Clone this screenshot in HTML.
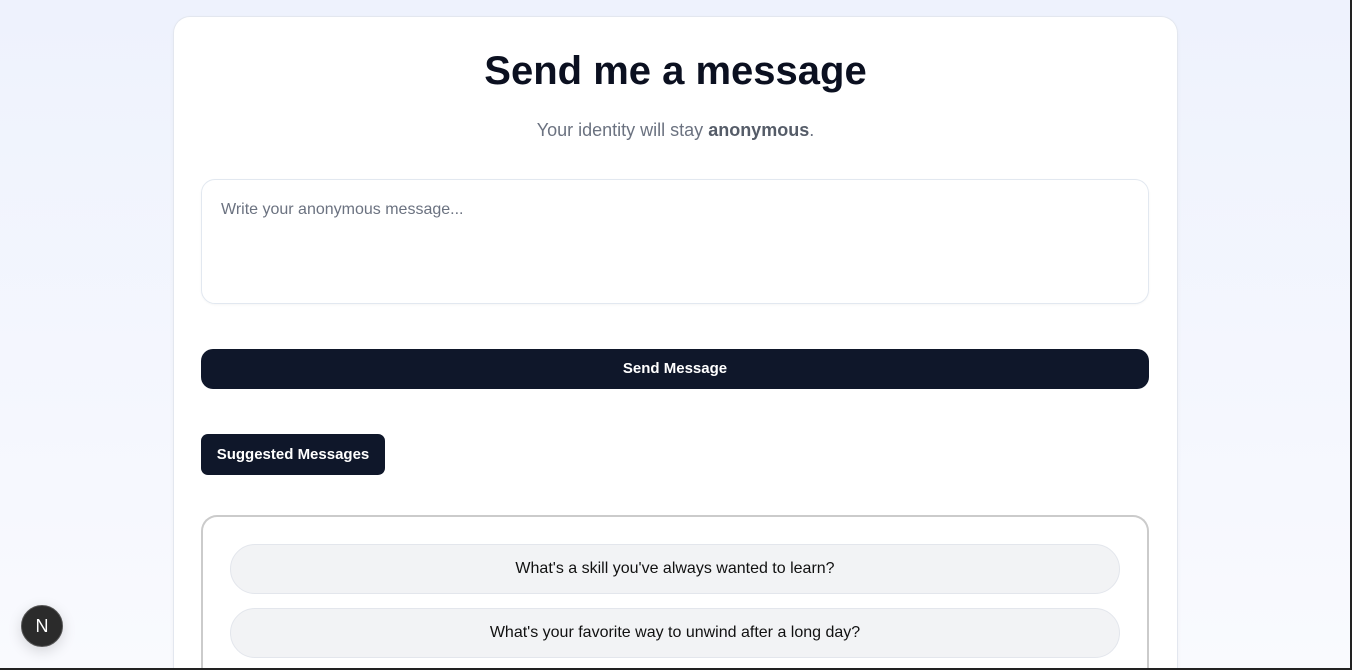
<!DOCTYPE html>
<html><head><style>
*{box-sizing:border-box;margin:0;padding:0}
html,body{width:1352px;height:670px;overflow:hidden}
body{background:linear-gradient(#eef2fd,#f9fafe);font-family:"Liberation Sans",sans-serif;position:relative}
.frame{position:absolute;right:0;top:0;width:2px;height:670px;background:#222;z-index:5}
.fb{position:absolute;left:0;top:668px;width:1352px;height:2px;background:#222;z-index:5}
.card{position:absolute;left:174px;top:17px;width:1003px;height:651px;overflow:hidden;background:#fff;border-radius:16px 16px 0 0;box-shadow:0 0 0 1px #e3e7ef,0 2px 6px rgba(0,0,0,.05)}
h1{position:absolute;left:0;width:100%;top:32px;text-align:center;font-size:40px;font-weight:bold;color:#0b1020}
.sub{position:absolute;left:0;width:100%;top:103px;text-align:center;font-size:18px;color:#6b7280}
.sub b{color:#555c68}
.ta{position:absolute;left:27px;top:162px;width:948px;height:125px;border:1px solid #e2e8f0;border-radius:14px;padding:21px 19px;font-size:16px;color:#6b7280;box-shadow:0 1px 2px rgba(0,0,0,.04)}
.send{position:absolute;left:27px;top:332px;width:948px;height:40px;background:#0f172a;border-radius:12px;color:#fff;font-weight:bold;font-size:15px;text-align:center;line-height:40px}
.sug{position:absolute;left:27px;top:417px;width:184px;height:41px;background:#0f172a;border-radius:7px;color:#fff;font-weight:bold;font-size:15px;text-align:center;line-height:41px}
.box{position:absolute;left:27px;top:498px;width:948px;height:153px;border:2px solid #cbcbcb;border-bottom:none;border-radius:16px 16px 0 0}
.pill{position:absolute;left:27px;width:890px;height:50px;background:#f2f3f5;border:1px solid #e3e6ec;border-radius:25px;text-align:center;line-height:48px;font-size:16px;color:#111}
.n{position:absolute;left:21px;top:605px;width:42px;height:42px;border-radius:50%;background:#2b2b2b;border:1px solid #555;color:#fff;font-size:18px;text-align:center;line-height:40px;box-shadow:0 4px 14px rgba(0,0,0,.15)}
</style></head><body>
<div class="card">
<h1>Send me a message</h1>
<div class="sub">Your identity will stay <b>anonymous</b>.</div>
<div class="ta">Write your anonymous message...</div>
<div class="send">Send Message</div>
<div class="sug">Suggested Messages</div>
<div class="box">
<div class="pill" style="top:27px">What's a skill you've always wanted to learn?</div>
<div class="pill" style="top:91px">What's your favorite way to unwind after a long day?</div>
</div>
</div>
<div class="n">N</div>
<div class="frame"></div><div class="fb"></div>
</body></html>
